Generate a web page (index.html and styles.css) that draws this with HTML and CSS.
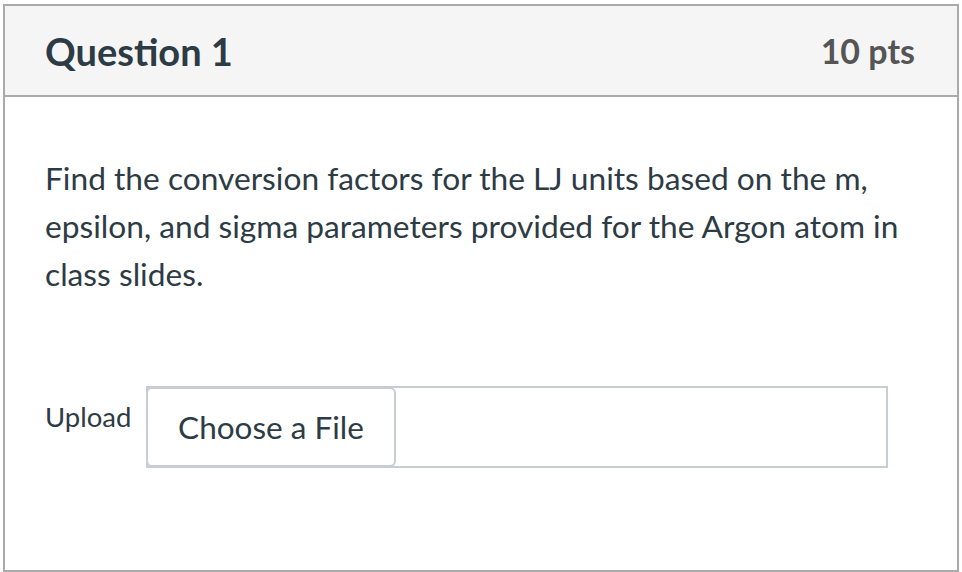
FILE: index.html
```html
<!DOCTYPE html>
<html>
<head>
<meta charset="utf-8">
<link rel="stylesheet" href="styles.css">
</head>
<body>
<div class="card">
  <div class="header">
    <h2 class="title">Question 1</h2>
    <span class="pts">10 pts</span>
  </div>
  <div class="content">
    <p class="text">Find the conversion factors for the LJ units based on the m, epsilon, and sigma parameters provided for the Argon atom in class slides.</p>
    <div class="upload">
      <span class="label">Upload</span>
      <div class="filebox">
        <button class="choose">Choose a File</button>
      </div>
    </div>
  </div>
</div>
</body>
</html>
```

FILE: styles.css
```css
html, body {
  margin: 0;
  padding: 0;
  background: #fff;
}
body {
  font-family: Lato, "Open Sans", sans-serif;
  color: #2d3b45;
  padding: 4px 3px 0 3px;
  width: 962px;
  box-sizing: border-box;
}
.card {
  border: 2px solid #aaaaaa;
  height: 568px;
  box-sizing: border-box;
  display: flex;
  flex-direction: column;
}
.header {
  background: #f5f5f5;
  border-bottom: 2px solid #aaaaaa;
  height: 91px;
  box-sizing: border-box;
  display: flex;
  align-items: center;
  justify-content: space-between;
  padding: 0 42px 0 40px;
}
.title {
  margin: 0;
  font-size: 38px;
  font-weight: 700;
  color: #2d3b45;
}
.pts {
  font-size: 34px;
  font-weight: 700;
  color: #555555;
}
.content {
  padding: 57px 40px 0 40px;
}
.text {
  margin: 0;
  font-size: 31.7px;
  line-height: 48px;
  color: #2d3b45;
}
.upload {
  display: flex;
  align-items: flex-start;
  margin-top: 88px;
}
.label {
  font-size: 27.5px;
  width: 101px;
  padding-top: 14px;
  color: #2d3b45;
}
.filebox {
  width: 742px;
  height: 82px;
  border: 2px solid #c7cdd1;
  box-sizing: border-box;
  display: flex;
}
.choose {
  margin: -1px 0 -1px -2px;
  width: 250px;
  height: 80px;
  border: 2px solid #c7cdd1;
  border-radius: 6px;
  background: #fff;
  font-family: Lato, sans-serif;
  font-size: 31.5px;
  color: #2d3b45;
  padding: 0;
}
```
